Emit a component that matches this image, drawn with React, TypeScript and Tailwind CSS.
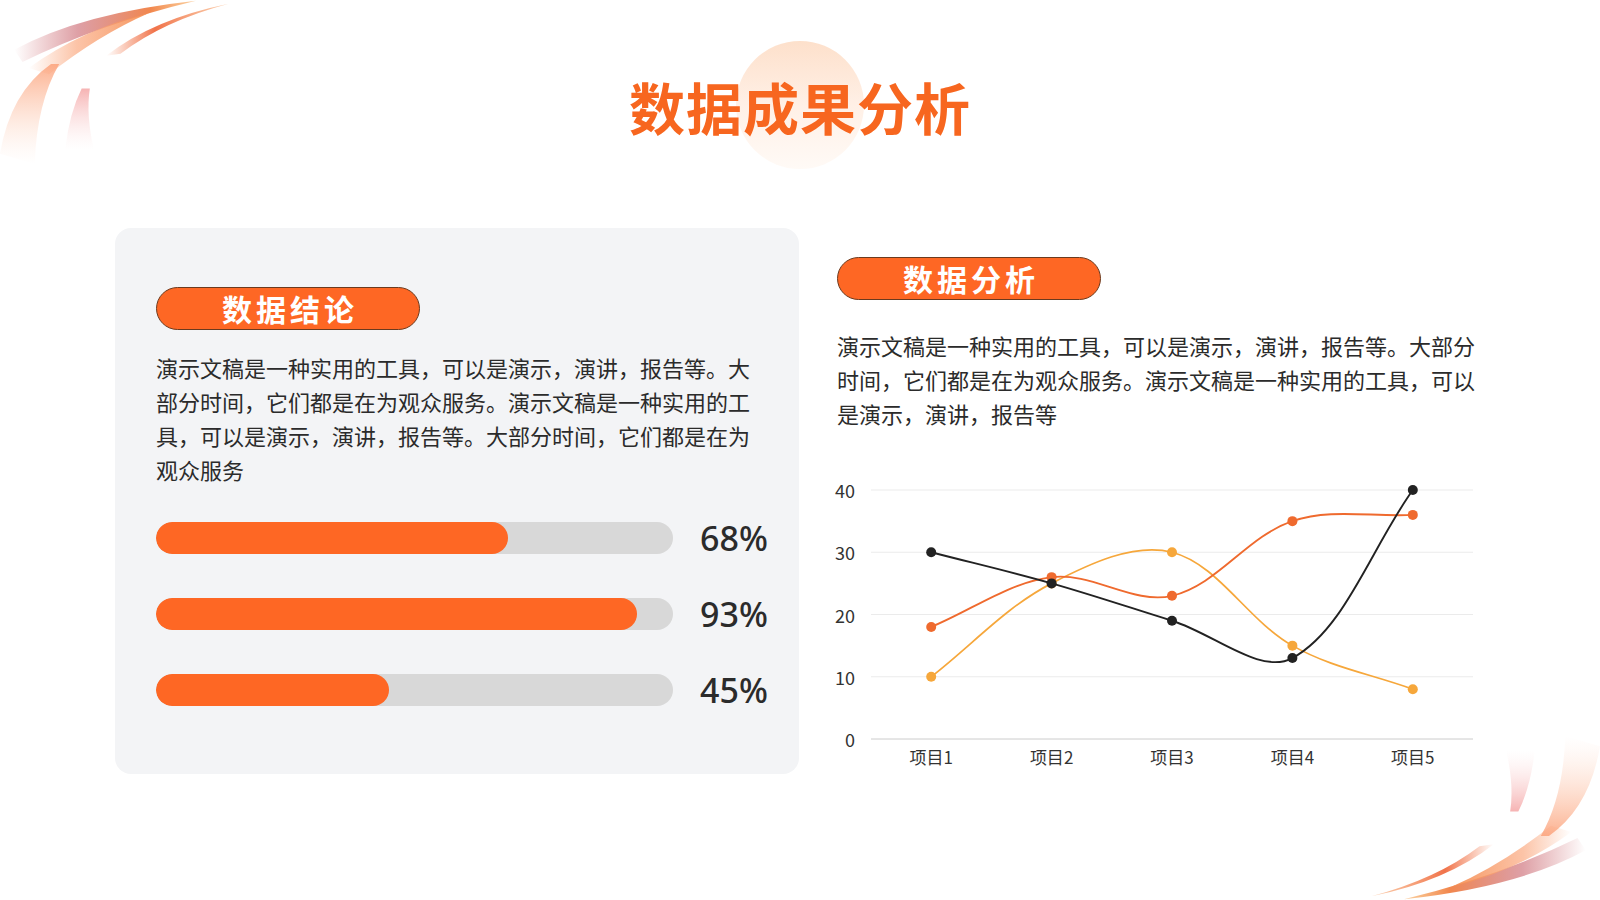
import React from 'react';

const FONT = '"Noto Sans CJK SC", "Noto Sans", sans-serif';

type Pt = [number, number];

// smoothing like the chart lib: control arms scale with the neighbouring segment lengths
function smoothPath(pts: Pt[], s = 0.35) {
  const n = pts.length;
  const cps: { inn: Pt; out: Pt }[] = pts.map((p, i) => {
    const prev = pts[i - 1] || p;
    const next = pts[i + 1] || p;
    const vx = next[0] - prev[0];
    const vy = next[1] - prev[1];
    const l0 = Math.hypot(p[0] - prev[0], p[1] - prev[1]);
    const l1 = Math.hypot(next[0] - p[0], next[1] - p[1]);
    const r = l0 + l1 === 0 ? 0.5 : l1 / (l0 + l1);
    return {
      inn: [p[0] - vx * s * (1 - r), p[1] - vy * s * (1 - r)],
      out: [p[0] + vx * s * r, p[1] + vy * s * r],
    };
  });
  let d = `M${pts[0][0]},${pts[0][1]}`;
  for (let i = 0; i < n - 1; i++) {
    const a = cps[i].out;
    const b = cps[i + 1].inn;
    d += ` C${a[0]},${a[1]} ${b[0]},${b[1]} ${pts[i + 1][0]},${pts[i + 1][1]}`;
  }
  return d;
}

const xs = [104.2, 224.6, 345, 465.4, 585.8];
const yOf = (v: number) => 269 - v * 6.225;

const series = [
  { color: '#f6a73b', values: [10, 25, 30, 15, 8], width: 1.7 },
  { color: '#ef6a2e', values: [18, 26, 23, 35, 36], width: 1.9 },
  { color: '#222222', values: [30, 25, 19, 13, 40], width: 1.9 },
];

function Swoosh() {
  return (
    <svg width="245" height="175" viewBox="0 0 240 170">
      <defs>
        <linearGradient id="gRose" x1="0" y1="0" x2="1" y2="0">
          <stop offset="0" stopColor="#c85a60" stopOpacity="0" />
          <stop offset="0.35" stopColor="#c8606a" stopOpacity="0.6" />
          <stop offset="0.75" stopColor="#f07a3a" stopOpacity="0.9" />
          <stop offset="1" stopColor="#f8b060" stopOpacity="0.6" />
        </linearGradient>
        <linearGradient id="gPeach" x1="0" y1="0" x2="1" y2="0">
          <stop offset="0" stopColor="#fbb08a" stopOpacity="0" />
          <stop offset="0.4" stopColor="#fbb08a" stopOpacity="0.75" />
          <stop offset="1" stopColor="#f4884a" stopOpacity="0.9" />
        </linearGradient>
        <linearGradient id="gRed" x1="0" y1="0" x2="1" y2="0">
          <stop offset="0" stopColor="#f0602a" stopOpacity="0" />
          <stop offset="0.4" stopColor="#ee5a2a" stopOpacity="0.85" />
          <stop offset="1" stopColor="#f8a060" stopOpacity="0.5" />
        </linearGradient>
        <linearGradient id="gTall" x1="0" y1="0" x2="0" y2="1">
          <stop offset="0" stopColor="#fca27a" stopOpacity="0.85" />
          <stop offset="1" stopColor="#fde0d0" stopOpacity="0" />
        </linearGradient>
        <linearGradient id="gPink" x1="0" y1="0" x2="0" y2="1">
          <stop offset="0" stopColor="#f4a0a0" stopOpacity="0.8" />
          <stop offset="1" stopColor="#fbe0e0" stopOpacity="0" />
        </linearGradient>
      </defs>
      <path d="M14 48 Q80 12 192 0 Q100 22 22 60 Z" fill="url(#gRose)" />
      <path d="M28 66 Q80 28 146 12 Q96 34 48 72 Z" fill="url(#gPeach)" />
      <path d="M104 54 Q150 18 224 3 Q160 20 118 52 Z" fill="url(#gRed)" />
      <path d="M0 150 Q10 90 50 62 L58 62 Q36 100 34 160 Z" fill="url(#gTall)" />
      <path d="M64 145 Q68 110 80 86 L88 86 Q84 112 92 146 Z" fill="url(#gPink)" />
    </svg>
  );
}

function Pill({ children }: { children: React.ReactNode }) {
  return (
    <div className="flex h-[43px] w-[264px] items-center justify-center rounded-full border border-[#6b3a1e] bg-[#fe6724]">
      <span className="-mt-[2px] pl-[4px] text-[30px] font-bold leading-none tracking-[4px] text-white">{children}</span>
    </div>
  );
}

function Bar({ value }: { value: number }) {
  return (
    <div className="flex h-[32px] items-center">
      <div className="h-[32px] w-[517px] shrink-0 overflow-hidden rounded-full bg-[#d8d8d8]">
        <div className="h-full rounded-full bg-[#fe6724]" style={{ width: `${value}%` }} />
      </div>
      <span className="ml-[27px] shrink-0 text-[34px] font-medium leading-none text-[#2b2b2b]" style={{ fontFamily: '"Noto Sans", sans-serif' }}>
        {value}%
      </span>
    </div>
  );
}

function Chart() {
  return (
    <svg width="660" height="305" viewBox="0 0 660 305" className="-ml-2.5 mt-[40px]">
      {[40, 30, 20, 10].map((v) => (
        <line key={v} x1="44" x2="646" y1={yOf(v)} y2={yOf(v)} stroke="#ebebeb" strokeWidth="1" />
      ))}
      <line x1="44" x2="646" y1={yOf(0)} y2={yOf(0)} stroke="#cccccc" strokeWidth="1" />
      {[0, 10, 20, 30, 40].map((v) => (
        <text key={v} x="28" y={yOf(v)} textAnchor="end" dominantBaseline="central" fontSize="18" fill="#333" fontFamily={FONT}>
          {v}
        </text>
      ))}
      {xs.map((x, i) => (
        <text key={i} x={x} y="286" textAnchor="middle" dominantBaseline="central" fontSize="17" fill="#333" fontFamily={FONT}>
          项目{i + 1}
        </text>
      ))}
      {series.map((s) => {
        const pts: Pt[] = s.values.map((v, i) => [xs[i], yOf(v)]);
        return (
          <g key={s.color}>
            <path d={smoothPath(pts)} fill="none" stroke={s.color} strokeWidth={s.width} />
            {pts.map((p, i) => (
              <circle key={i} cx={p[0]} cy={p[1]} r="5" fill={s.color} />
            ))}
          </g>
        );
      })}
    </svg>
  );
}

export default function App() {
  return (
    <div className="relative h-[900px] w-[1600px] overflow-hidden bg-white" style={{ fontFamily: FONT }}>
      {/* corner decorations */}
      <div className="absolute left-0 top-0">
        <Swoosh />
      </div>
      <div className="absolute bottom-0 right-0 rotate-180">
        <Swoosh />
      </div>

      {/* title */}
      <header className="flex justify-center pt-[78px]">
        <div className="relative">
          <div className="absolute left-1/2 top-[-37px] h-[128px] w-[128px] -translate-x-1/2 rounded-full bg-gradient-to-b from-[#fde0cb] via-[#fff0e6] to-[#fffaf6]" />
          <h1 className="relative text-[56px] font-bold leading-none tracking-[1px] text-[#f7661f]">数据成果分析</h1>
        </div>
      </header>

      <main className="mt-[94px] flex pl-[115px]">
        {/* left card */}
        <section className="h-[546px] w-[684px] shrink-0 rounded-2xl bg-[#f3f4f6] px-[41px] pt-[59px]">
          <Pill>数据结论</Pill>
          <p className="mt-[20px] w-[600px] text-[22px] leading-[34px] text-[#2b2b2b]">
            演示文稿是一种实用的工具，可以是演示，演讲，报告等。大部分时间，它们都是在为观众服务。演示文稿是一种实用的工具，可以是演示，演讲，报告等。大部分时间，它们都是在为观众服务
          </p>
          <div className="mt-[36px] flex flex-col gap-[44px]">
            <Bar value={68} />
            <Bar value={93} />
            <Bar value={45} />
          </div>
        </section>

        {/* right column */}
        <section className="ml-[38px] w-[650px] pt-[29px]">
          <Pill>数据分析</Pill>
          <p className="mt-[28px] w-[645px] text-[22px] leading-[34px] text-[#2b2b2b]">
            演示文稿是一种实用的工具，可以是演示，演讲，报告等。大部分时间，它们都是在为观众服务。演示文稿是一种实用的工具，可以是演示，演讲，报告等
          </p>
          <Chart />
        </section>
      </main>
    </div>
  );
}
